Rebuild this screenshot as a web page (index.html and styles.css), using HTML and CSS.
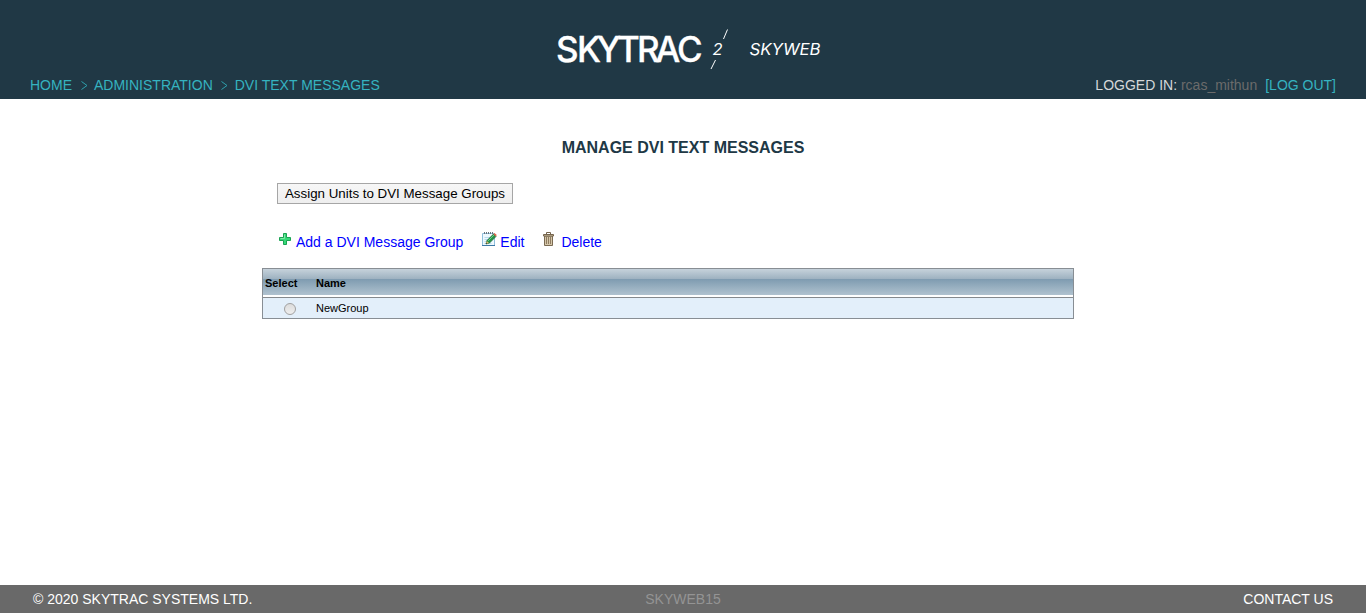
FILE: index.html
```html
<!DOCTYPE html>
<html lang="en">
<head>
<meta charset="utf-8">
<title>Manage DVI Text Messages</title>
<link rel="stylesheet" href="styles.css">
</head>
<body>
<header class="header">
  <svg class="logo" width="270" height="46" viewBox="0 0 270 46" role="img" aria-label="Skytrac Skyweb">
    <text class="logo-name" x="-1 20 39.5 60 80 98.5 120" y="35.5">SKYTRAC</text>
    <path d="M170.500 3.500 166.500 13M158.500 34 154 43" fill="none" stroke="#fff" stroke-width="1"/>
    <text class="logo-sub" x="155.500" y="29">2</text>
    <text class="logo-sub" x="192.500" y="29" textLength="71" lengthAdjust="spacingAndGlyphs">SKYWEB</text>
  </svg>
  <div class="bar">
    <nav class="crumbs"><a>HOME</a><svg class="arrow" width="7" height="9" viewBox="0 0 7 9"><path d="M.5.5 6 4.500.5 8.500"/></svg><a>ADMINISTRATION</a><svg class="arrow" width="7" height="9" viewBox="0 0 7 9"><path d="M.5.5 6 4.500.5 8.500"/></svg><a>DVI TEXT MESSAGES</a></nav>
    <div class="login">LOGGED IN: <span class="user">rcas_mithun</span><a class="logout">[LOG OUT]</a></div>
  </div>
</header>
<main class="main">
  <h1 class="title">MANAGE DVI TEXT MESSAGES</h1>
  <button class="assign">Assign Units to DVI Message Groups</button>
  <div class="actions">
    <a class="action add"><svg width="12" height="12" viewBox="0 0 12 12"><path d="M4.500.5h3v4h4v3h-4v4h-3v-4h-4v-3h4z" fill="#35d978" stroke="#1ba252"/><path d="M5.500 1.500v4h-4" fill="none" stroke="#7eeaa7"/></svg>Add a DVI Message Group</a>
    <a class="action edit"><svg width="15" height="16" viewBox="0 0 15 16"><path d="M.5 2.500h12v12H.5z" fill="#eef8fe" stroke="#8fbfdc"/><path d="M0 14.500h13" stroke="#3c78a5"/><path d="M2.500 6.500h7M2.500 8.500h5M2.500 10.500h4M2.500 12.500h7" stroke="#b9dbee"/><path d="M2.500 1v2M4.500 1v2M6.500 1v2M8.500 1v2M10.500 1v2" stroke="#69747c"/><path d="M5 9.500 11.500 3l2.500 2.500L7.500 12l-3.500 1z" fill="#249348" stroke="#176534" stroke-width=".7"/><path d="m6 10 6-6" stroke="#6ad184"/><path d="m11.500 3 1-1 2.300 2-1.200 1.500z" fill="#df6547"/><path d="m4 13 .8-3L7 12z" fill="#e9bd73"/><path d="m4 13 .3-1.200 1 .9z" fill="#222"/></svg>Edit</a>
    <a class="action delete"><svg width="11" height="14" viewBox="0 0 11 14"><path d="M3.500 2V.5h4V2" fill="none" stroke="#75644c"/><path d="M1.500 4h8v9.500h-8z" fill="#d5c7aa" stroke="#7a6a52"/><path d="M.5 2.500h10v1.500H.5z" fill="#d8c9aa" stroke="#75644c"/><path d="M3.500 5v7M5.500 5v7M7.500 5v7" stroke="#8f7c60"/></svg>Delete</a>
  </div>
  <div class="grid">
    <div class="grid-head"><span class="select">Select</span><span>Name</span></div>
    <div class="grid-row"><span class="select"><i class="radio"></i></span><span>NewGroup</span></div>
  </div>
</main>
<footer class="footer"><span>© 2020 SKYTRAC SYSTEMS LTD.</span><span class="server">SKYWEB15</span><span class="contact">CONTACT US</span></footer>
</body>
</html>
```
FILE: styles.css
```css
* { box-sizing: border-box; }
body {
  margin: 0;
  height: 613px;
  display: flex;
  flex-direction: column;
  background: #fff;
  font: 14px/16px "Liberation Sans", Arial, sans-serif;
}
.header { height: 99px; padding-top: 26px; background: #203845; }
.logo { display: block; margin-left: 557px; overflow: visible; }
.logo-name { font: 500 35px Inter, sans-serif; fill: #fff; stroke: #fff; stroke-width: .3; }
.logo-sub { font: italic 400 16.5px Inter, sans-serif; fill: #fff; }
.bar { display: flex; justify-content: space-between; padding: 5px 30px 0; }
.crumbs { display: flex; }
.crumbs, .logout { color: #35b3c0; }
.arrow { margin: 4px 6px 0 9px; fill: none; stroke: #2fa0ac; }
.arrow + a + .arrow { margin: 4px 7px 0 8px; }
.login { color: #d5d8da; }
.user { margin-right: 8px; color: #6b6b6b; }
.main { flex: 1; }
.title { margin: 40px 0 0; text-align: center; color: #203845; font-size: 16px; line-height: 18px; }
.assign {
  display: block;
  width: 236px;
  height: 21px;
  margin: 26px 0 0 277px;
  padding: 0;
  border: 1px solid #a6a6a6;
  border-radius: 0;
  background: linear-gradient(#f7f7f7, #eee);
  color: #000;
  font: 13.333px/19px "Liberation Sans", Arial, sans-serif;
}
.actions { display: flex; height: 18px; margin: 29px 0 0 279px; color: #00f; }
.action { display: flex; line-height: 18px; }
.add svg { margin-right: 5px; }
.edit { margin-left: 19px; }
.edit svg { margin: -2px 3px 0 0; }
.delete { margin-left: 19px; }
.delete svg { margin: -1px 7px 0 0; }
.grid { width: 812px; height: 51px; margin: 17px 0 0 262px; border: 1px solid #888e94; color: #000; font-size: 11px; }
.grid-head, .grid-row { display: flex; align-items: center; }
.grid-head {
  height: 26px;
  padding-top: 2px;
  background: linear-gradient(#c6d2db 0, #9db1c0 10px, #7e9bb0 10px, #b0c2cf 100%);
  font-weight: 700;
}
.grid-row { height: 21px; margin-top: 2px; border-top: 1px solid #85898d; background: #e3effa; }
.select { width: 53px; padding-left: 2px; }
.radio { display: block; width: 12px; height: 12px; margin: 2px 0 0 19px; border: 1px solid #a0a0a0; border-radius: 50%; background: linear-gradient(#dcdcdc, #eee); }
.footer { display: grid; grid-template-columns: 1fr auto 1fr; height: 28px; padding: 0 33px; background: #696969; color: #fff; line-height: 28px; }
.server { color: #949494; }
.contact { text-align: right; }
```
